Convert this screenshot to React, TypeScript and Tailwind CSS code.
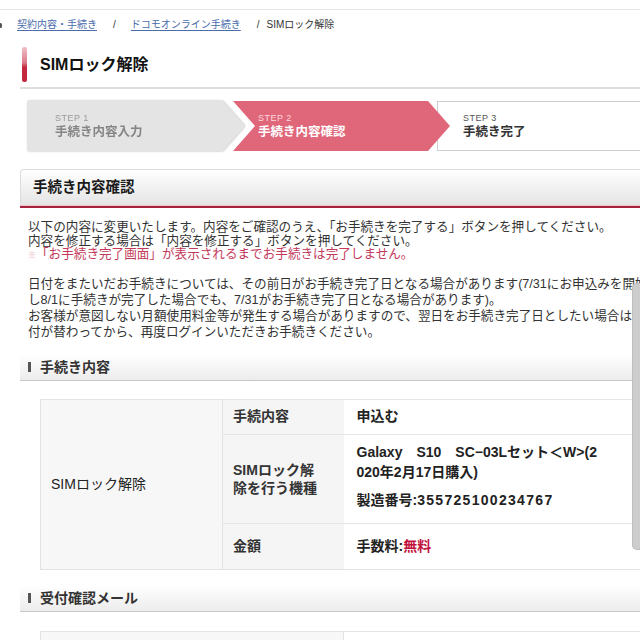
import React from "react";

type StepProps = {
  label: string;
  title: string;
  variant: "done" | "current" | "next";
};

function Step({ label, title, variant }: StepProps) {
  if (variant === "done") {
    return (
      <div className="relative z-0 h-full w-[217px] shrink-0 [filter:drop-shadow(0_0_1px_#aaaaaa)]">
        <div className="flex h-full flex-col justify-center bg-[#e4e4e4] pl-[27px] [clip-path:polygon(0_0,calc(100%_-_22px)_0,100%_50%,calc(100%_-_22px)_100%,0_100%)]">
          <span className="text-[9px] leading-[12px] tracking-[0.5px] text-[#9a9a9a]">{label}</span>
          <span className="text-[12.5px] font-bold leading-[16px] text-[#858585]">{title}</span>
        </div>
      </div>
    );
  }
  if (variant === "current") {
    return (
      <div className="relative z-10 ml-[-12px] h-full w-[217px] shrink-0">
        <div className="flex h-full flex-col justify-center bg-[#e0667a] pl-[25px] [clip-path:polygon(0_0,calc(100%_-_22px)_0,100%_50%,calc(100%_-_22px)_100%,0_100%,22px_50%)]">
          <span className="text-[9px] leading-[12px] tracking-[0.5px] text-[#fbd9df]">{label}</span>
          <span className="text-[12.5px] font-bold leading-[16px] text-white">{title}</span>
        </div>
      </div>
    );
  }
  return (
    <div className="relative z-0 ml-[-13px] flex h-full w-[240px] shrink-0 flex-col justify-center border border-[#cfcfcf] bg-white pl-[25px]">
      <span className="text-[9px] leading-[12px] tracking-[0.5px] text-[#555]">{label}</span>
      <span className="text-[12.5px] font-bold leading-[16px] text-[#333]">{title}</span>
    </div>
  );
}

function SubHeader({ title }: { title: string }) {
  return (
    <div className="ml-[20px] flex h-[26px] items-center border-b border-[#c9c9c9] bg-gradient-to-b from-white to-[#ececec]">
      <span className="ml-[8px] h-[10px] w-[3px] bg-[#555]" />
      <span className="ml-[9px] text-[14px] font-bold text-[#333]">{title}</span>
    </div>
  );
}

export default function App() {
  return (
    <div className="relative h-[640px] w-[640px] overflow-hidden bg-white font-['Liberation_Sans','Noto_Sans_CJK_JP',sans-serif] text-[#222]">
      <div className="w-[720px]">
        {/* top strip */}
        <div className="h-[10px] border-b border-[#e6e6e6]" />

        {/* breadcrumb */}
        <nav className="mt-[8px] flex h-[14px] items-center text-[10px] leading-none text-[#333]">
          <span className="ml-[-1px] mr-[15px] h-[5px] w-[3px] rounded-sm bg-[#555]" />
          <a className="text-[#4a6cab] underline underline-offset-2">契約内容・手続き</a>
          <span className="ml-[16px] mr-[15px]">/</span>
          <a className="text-[#4a6cab] underline underline-offset-2">ドコモオンライン手続き</a>
          <span className="ml-[16px] mr-[7px]">/</span>
          <span>SIMロック解除</span>
        </nav>

        {/* page title */}
        <div className="ml-[22px] mt-[15px] flex h-[35px] items-center">
          <div className="h-full w-[5px] rounded-[2px] bg-[linear-gradient(#efc0c7,#dc7a88_45%,#c5293f_58%,#c0283e)]" />
          <h1 className="ml-[13px] text-[16px] font-bold text-[#111]">SIMロック解除</h1>
        </div>
        <div className="ml-[20px] mt-[5px] h-[2px] bg-[#dedede]" />

        {/* steps */}
        <div className="ml-[28px] mt-[12px] flex h-[50px]">
          <Step variant="done" label="STEP 1" title="手続き内容入力" />
          <Step variant="current" label="STEP 2" title="手続き内容確認" />
          <Step variant="next" label="STEP 3" title="手続き完了" />
        </div>

        {/* section header */}
        <div className="ml-[20px] mt-[18px]">
          <div className="flex h-[36px] items-center rounded-tl-[4px] border border-b-0 border-[#dcdcdc] bg-gradient-to-b from-white to-[#e4e4e4] pl-[12px]">
            <h2 className="text-[14.5px] font-bold text-[#1a1a1a]">手続き内容確認</h2>
          </div>
          <div className="h-[1px] bg-[#efc4cb]" />
          <div className="h-[2px] bg-[#a5213d]" />
        </div>

        {/* notes */}
        <p className="ml-[28px] mt-[13px] whitespace-nowrap text-[12.6px] leading-[13.5px] text-[#333]">
          以下の内容に変更いたします。内容をご確認のうえ、「お手続きを完了する」ボタンを押してください。
          <br />
          内容を修正する場合は「内容を修正する」ボタンを押してください。
          <br />
          <span className="text-[#c3395a]">
            <span className="text-[8px] text-[#e4a0ae]">※</span>「お手続き完了画面」が表示されるまでお手続きは完了しません。
          </span>
        </p>
        <p className="ml-[28px] mt-[13px] whitespace-nowrap text-[12.6px] leading-[16px] text-[#333]">
          日付をまたいだお手続きについては、その前日がお手続き完了日となる場合があります(7/31にお申込みを開始
          <br />
          し8/1に手続きが完了した場合でも、7/31がお手続き完了日となる場合があります)。
          <br />
          お客様が意図しない月額使用料金等が発生する場合がありますので、翌日をお手続き完了日としたい場合は日
          <br />
          付が替わってから、再度ログインいただきお手続きください。
        </p>

        {/* procedure details */}
        <div className="mt-[15px]">
          <SubHeader title="手続き内容" />
        </div>

        <table className="ml-[40px] mt-[18px] w-[640px] border-collapse text-[14px]">
          <tbody>
            <tr className="h-[35px]">
              <td
                rowSpan={3}
                className="w-[182px] border border-[#e3e3e3] bg-[#f7f7f7] pl-[10px] text-[14px] text-[#222]"
              >
                SIMロック解除
              </td>
              <td className="w-[121px] border-b border-t border-[#e6e6e6] bg-[#f5f5f5] pl-[10px] font-bold text-[#333]">
                手続内容
              </td>
              <td className="border-b border-t border-[#e6e6e6] pl-[13px] font-bold text-[#222]">
                申込む
              </td>
            </tr>
            <tr className="h-[89px]">
              <td className="border-b border-[#e6e6e6] bg-[#f5f5f5] pl-[10px] font-bold leading-[18px] text-[#333]">
                SIMロック解
                <br />
                除を行う機種
              </td>
              <td className="whitespace-nowrap border-b border-[#e6e6e6] pb-[6px] pl-[13px] font-bold text-[#222]">
                <div className="leading-[20px]">
                  Galaxy　S10　SC−03Lセット＜W&gt;(2
                  <br />
                  020年2月17日購入)
                </div>
                <div className="mt-[8px] leading-[20px]">
                  製造番号:<span className="tracking-[1.3px]">355725100234767</span>
                </div>
              </td>
            </tr>
            <tr className="h-[46px]">
              <td className="border-b border-[#e3e3e3] bg-[#f5f5f5] pl-[10px] font-bold text-[#333]">
                金額
              </td>
              <td className="border-b border-[#e3e3e3] pl-[13px] font-bold text-[#222]">
                手数料:<span className="text-[#c2123e]">無料</span>
              </td>
            </tr>
          </tbody>
        </table>

        {/* confirmation mail */}
        <div className="mt-[16px]">
          <SubHeader title="受付確認メール" />
        </div>

        <div className="ml-[40px] mt-[19px] flex h-[40px] w-[640px] border border-[#e3e3e3]">
          <div className="w-[303px] border-r border-[#e3e3e3] bg-[#f7f7f7]" />
          <div className="flex-1 bg-white" />
        </div>
      </div>

      {/* scroll thumb overlay */}
      <div className="absolute right-0 top-[283px] h-[267px] w-[8px] rounded-l-[5px] border border-r-0 border-[#bdbdbd] bg-[#cdcdcd]" />
    </div>
  );
}
